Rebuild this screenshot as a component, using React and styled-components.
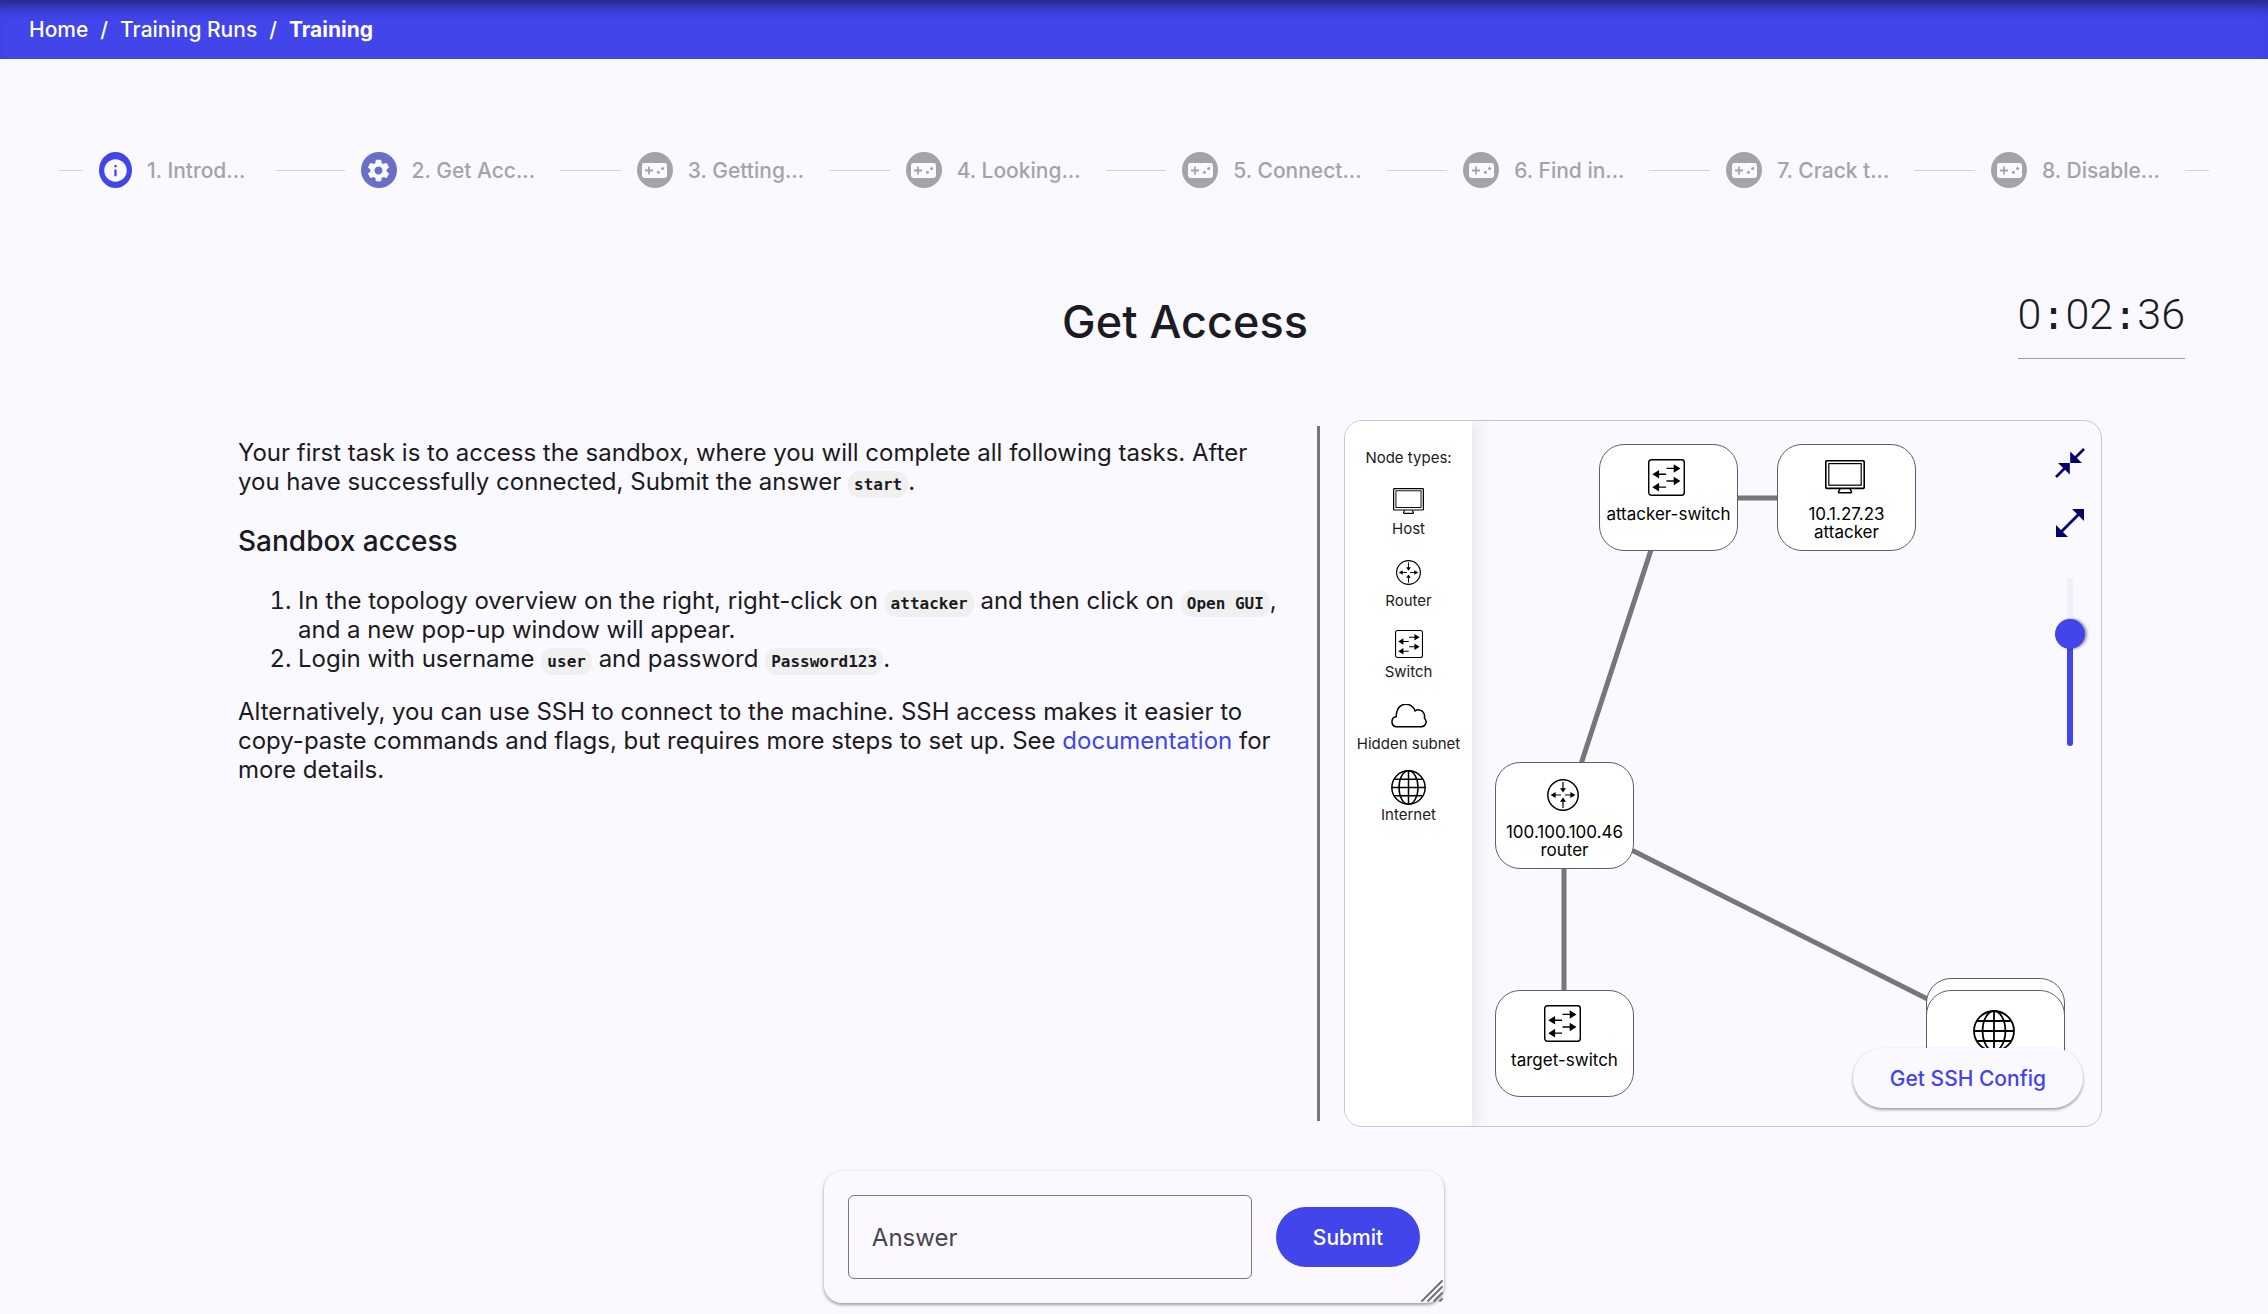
import React, { useState } from "react";
import styled, { createGlobalStyle } from "styled-components";
import { MdInfo, MdSettings } from "react-icons/md";

const sans = `Inter, "Noto Sans", sans-serif`;
const mono = `"DejaVu Sans Mono", monospace`;
const primary = "#4145ea";
const ink = "#1b1b21";
const surface = "#faf9ff";

const GlobalStyle = createGlobalStyle`
  * { box-sizing: border-box; }
  body {
    margin: 0;
    background: ${surface};
    color: ${ink};
    font-family: ${sans};
    font-size: 24px;
    line-height: 29px;
  }
  button, input { font-family: inherit; }
`;

const TopBar = styled.header`
  display: flex;
  align-items: center;
  height: 59px;
  padding: 0 29px;
  background: ${primary};
  box-shadow: inset 0 16px 16px -12px rgba(0, 0, 0, 0.55);
`;

const Crumbs = styled.nav`
  display: flex;
  gap: 12px;
  color: #fff;
  font-size: 21px;
  font-weight: 500;
`;

const Crumb = styled.a`
  color: inherit;
  text-decoration: none;
  font-weight: ${(p) => (p.$current ? 700 : 500)};
`;

const Page = styled.main`
  display: flex;
  flex-direction: column;
`;

const Stepper = styled.ol`
  display: flex;
  align-items: center;
  height: 108px;
  margin: 57px 59px;
  padding: 0;
  list-style: none;
`;

const Step = styled.li`
  display: flex;
  align-items: center;
  flex: ${(p) => (p.$last ? "0 0 auto" : `${p.$grow} 0 auto`)};
`;

const StepBody = styled.button`
  display: flex;
  align-items: center;
  gap: 15px;
  padding: 0 ${(p) => (p.$first ? 31 : 25)}px 0 16px;
  border: 0;
  background: none;
  color: #a4a3a9;
  font-size: 21px;
  font-weight: 500;
  line-height: 29px;
  white-space: nowrap;
`;

const StepIcon = styled.span`
  display: grid;
  place-items: center;
  width: ${(p) => (p.$narrow ? 33 : 36)}px;
  height: 36px;
  border-radius: 50%;
  background: ${(p) => p.$color};
  color: ${surface};
`;

const Rule = styled.span`
  flex: ${(p) => (p.$cap ? "0 0 24px" : "1 0 24px")};
  height: 1px;
  background: #d3d2d8;
`;

const TitleRow = styled.div`
  display: grid;
  grid-template-columns: 1fr auto 1fr;
  align-items: start;
  margin-bottom: 57px;
  padding: 0 83px 0 185px;
`;

const Title = styled.h1`
  grid-column: 2;
  margin: 0;
  font-size: 45px;
  font-weight: 500;
  line-height: 82px;
`;

const Timer = styled.time`
  justify-self: end;
  height: 78px;
  border-bottom: 1px solid #9c9ba2;
  font-family: Roboto, sans-serif;
  font-size: 43px;
  font-weight: 300;
  line-height: 66px;
`;

const Colon = styled.span`
  font-family: ${mono};
  font-size: 40px;
`;

const Columns = styled.div`
  display: grid;
  grid-template-columns: 1151fr 3px 782fr;
  margin: 0 166px;
`;

const Lesson = styled.section`
  padding: 18px 34px 0 72px;

  p { margin: 0 0 24px; }
  h2 {
    margin: 28px 0;
    font-size: 28px;
    font-weight: 500;
    line-height: 34px;
  }
  ol {
    margin: 0 0 24px;
    padding-left: 60px;
  }
`;

const Code = styled.code`
  padding: 4px 6px;
  border-radius: 12px;
  background: #f0f0f0;
  font-family: ${mono};
  font-size: 16px;
  font-weight: 700;
  line-height: 16px;
  white-space: nowrap;
`;

const DocLink = styled.a`
  color: ${primary};
  text-decoration: none;
`;

const Divider = styled.div`
  margin: 6px 0;
  background: #777680;
`;

const Panel = styled.section`
  display: flex;
  min-height: 707px;
  margin-left: 24px;
  overflow: hidden;
  border: 1px solid #c7c5d0;
  border-radius: 18px;
`;

const Legend = styled.aside`
  display: flex;
  flex-direction: column;
  align-items: center;
  flex: 0 0 127px;
  gap: 15px;
  padding-top: 27px;
  background: #fff;
  box-shadow: 0 0 20px rgba(60, 60, 90, 0.16);
  font-size: 15px;
  line-height: 20px;
`;

const LegendList = styled.ul`
  display: flex;
  flex-direction: column;
  justify-content: space-between;
  height: 342px;
  margin: 0;
  padding: 0;
  list-style: none;
`;

const LegendItem = styled.li`
  display: flex;
  flex-direction: column;
  align-items: center;
`;

const IconBox = styled.span`
  display: grid;
  place-items: center;
  height: ${(p) => p.$h}px;
`;

const Canvas = styled.div`
  position: relative;
  flex: 1;
  overflow: hidden;
`;

const Links = styled.svg`
  position: absolute;
  inset: 0;
  width: 100%;
  height: 100%;
`;

const Node = styled.div`
  position: absolute;
  left: ${(p) => p.$x}px;
  top: ${(p) => p.$y}px;
  display: flex;
  flex-direction: column;
  align-items: center;
  width: 139px;
  height: 107px;
  padding-top: 11px;
  border: 1px solid #5e5e65;
  border-radius: 25px;
  background: #fff;
  color: #000;
  font-size: 17px;
  line-height: 18px;
  text-align: center;
  white-space: nowrap;

  ${IconBox} {
    margin-bottom: 7px;
    padding-right: 4px;
  }
`;

const Controls = styled.div`
  position: absolute;
  top: 19px;
  right: 14px;
  display: flex;
  flex-direction: column;
  align-items: center;
`;

const IconButton = styled.button`
  display: grid;
  place-items: center;
  width: 34px;
  height: 46px;
  margin-bottom: 14px;
  padding: 0;
  border: 0;
  background: none;
  color: #06006c;
`;

const Zoom = styled.input`
  appearance: none;
  writing-mode: vertical-lr;
  direction: rtl;
  width: 30px;
  height: 168px;
  margin: 18px 0 0;
  background: none;

  &::-webkit-slider-runnable-track {
    width: 6px;
    border-radius: 3px;
    background: linear-gradient(to top, ${primary} 66%, #f0effa 66%);
  }
  &::-webkit-slider-thumb {
    appearance: none;
    width: 30px;
    height: 30px;
    margin-left: -12px;
    border-radius: 50%;
    background: ${primary};
    box-shadow: 2px 0 3px rgba(0, 0, 0, 0.4);
  }
`;

const Button = styled.button`
  height: 60px;
  padding: 0 37px;
  border: 0;
  border-radius: 30px;
  background: ${(p) => (p.$filled ? primary : surface)};
  color: ${(p) => (p.$filled ? "#fff" : primary)};
  box-shadow: ${(p) => (p.$filled ? "none" : "0 2px 3px rgba(0, 0, 0, 0.28), 0 1px 3px rgba(0, 0, 0, 0.14)")};
  font-size: 21px;
  font-weight: 500;
`;

const SshCorner = styled.div`
  position: absolute;
  right: 18px;
  bottom: 18px;
`;

const AnswerCard = styled.form`
  position: relative;
  display: flex;
  align-items: center;
  align-self: center;
  gap: 24px;
  margin: 44px 0 10px;
  padding: 24px;
  border-radius: 18px;
  background: #fbf8ff;
  box-shadow: 0 2px 3px rgba(0, 0, 0, 0.28), 0 1px 4px rgba(0, 0, 0, 0.14);
`;

const Field = styled.div`
  display: grid;
  width: 404px;
  align-items: center;

  > * { grid-area: 1 / 1; }
`;

const FieldLabel = styled.label`
  padding-left: 24px;
  color: #46464f;
  pointer-events: none;
  visibility: ${(p) => (p.$hidden ? "hidden" : "visible")};
`;

const FieldInput = styled.input`
  width: 100%;
  height: 84px;
  padding: 0 24px;
  border: 1px solid #777680;
  border-radius: 6px;
  background: none;
  color: ${ink};
  font-size: 24px;
`;

const Grip = styled.svg`
  position: absolute;
  right: 1px;
  bottom: 1px;
`;

function GamepadIcon() {
  return (
    <svg width="25" height="15" viewBox="0 0 25 15" aria-hidden="true">
      <rect width="25" height="15" rx="2.4" fill="currentColor" />
      <path d="M7 3.5v8M3 7.5h8" stroke="#a4a3a9" strokeWidth="1.8" />
      <circle cx="16.4" cy="9.2" r="1.5" fill="#a4a3a9" />
      <circle cx="20.6" cy="5.6" r="1.5" fill="#a4a3a9" />
    </svg>
  );
}

function HostIcon({ size }) {
  return (
    <svg width={size} height={size * 0.84} viewBox="0 0 40 33.6" fill="none" stroke="#000" aria-hidden="true">
      <rect x="0.8" y="0.8" width="38.4" height="27.6" rx="1" strokeWidth="1.6" />
      <rect x="3.8" y="3.6" width="32.4" height="21.6" strokeWidth="1.2" />
      <path d="M15 28.6l-1.4 3.2q-.2 1 .8 1h11.2q1 0 .8-1L25 28.6" strokeWidth="1.5" />
    </svg>
  );
}

function RouterIcon({ size }) {
  return (
    <svg width={size} height={size} viewBox="0 0 32 32" aria-hidden="true">
      <circle cx="16" cy="16" r="15.2" fill="none" stroke="#000" strokeWidth="1.5" />
      <path d="M16 3v7M16 29v-7M14 16H8M18 16h7" stroke="#000" strokeWidth="1.2" />
      <path d="M13 9.2h6L16 13.6zM13 22.8h6L16 18.4zM8.6 13v6L3.6 16zM23.4 13v6L28.4 16z" />
    </svg>
  );
}

function SwitchIcon({ size }) {
  return (
    <svg width={size} height={size} viewBox="0 0 36 36" aria-hidden="true">
      <rect x="0.7" y="0.7" width="34.6" height="34.6" rx="2.6" fill="none" stroke="#000" strokeWidth="1.4" />
      <path d="M18 9.2h9M18 21.4h9M17.6 14.8h-9M17.6 27.4h-9" stroke="#000" strokeWidth="1.3" />
      <path d="M25 5v8.4l6.6-4.2zM25 17.2v8.4l6.6-4.2zM10.8 10.6V19l-6.6-4.2zM10.8 23.2v8.4l-6.6-4.2z" />
    </svg>
  );
}

function CloudIcon() {
  return (
    <svg width="37" height="24" viewBox="0 0 37 24" fill="none" stroke="#000" strokeWidth="1.5" strokeLinejoin="round" aria-hidden="true">
      <path d="M6 22.8h25.4a4.9 4.9 0 0 0 3-8.6q.8-3.6-1.4-6.2a5.8 5.8 0 0 0-8-1A9.4 9.4 0 0 0 6.6 9q-.6 1.8-.2 3.6A5.2 5.2 0 0 0 6 22.8z" />
    </svg>
  );
}

function GlobeIcon({ size }) {
  return (
    <svg width={size} height={size} viewBox="0 0 42 42" fill="none" stroke="#000" strokeWidth="1.8" aria-hidden="true">
      <circle cx="21" cy="21" r="20" />
      <ellipse cx="21" cy="21" rx="11.4" ry="20" />
      <path d="M21 1v40M1 21h40M4.2 11h33.6M4.2 31h33.6" />
    </svg>
  );
}

function ShrinkIcon() {
  return (
    <svg width="30" height="30" viewBox="0 0 30 30" fill="currentColor" aria-hidden="true">
      <path d="M15.2 3.4V15H27z" />
      <path d="M14.8 26.6V15H3z" />
      <path d="M18 12L29 1M12 18L1 29" stroke="currentColor" strokeWidth="2.6" />
    </svg>
  );
}

function GrowIcon() {
  return (
    <svg width="28" height="28" viewBox="0 0 28 28" fill="currentColor" aria-hidden="true">
      <path d="M16 0h12v12z" />
      <path d="M0 16v12h12z" />
      <path d="M5 23L23 5" stroke="currentColor" strokeWidth="2.8" />
    </svg>
  );
}

const steps = [
  { label: "1. Introd...", color: primary, icon: <MdInfo size={27} /> },
  { label: "2. Get Acc...", color: "#6a6ec6", icon: <MdSettings size={27} /> },
  ...["3. Getting...", "4. Looking...", "5. Connect...", "6. Find in...", "7. Crack t...", "8. Disable..."].map(
    (label) => ({ label, color: "#a4a3a9", icon: <GamepadIcon /> })
  ),
];

const nodeTypes = [
  { label: "Host", icon: <HostIcon size={31} /> },
  { label: "Router", icon: <RouterIcon size={25} /> },
  { label: "Switch", icon: <SwitchIcon size={28} /> },
  { label: "Hidden subnet", icon: <CloudIcon /> },
  { label: "Internet", icon: <GlobeIcon size={35} /> },
];

const nodes = [
  { x: 127, y: 23, icon: <SwitchIcon size={37} />, lines: ["attacker-switch"] },
  { x: 305, y: 23, icon: <HostIcon size={40} />, lines: ["10.1.27.23", "attacker"] },
  { x: 23, y: 341, icon: <RouterIcon size={32} />, lines: ["100.100.100.46", "router"] },
  { x: 23, y: 569, icon: <SwitchIcon size={37} />, lines: ["target-switch"] },
  { x: 454, y: 557, lines: [] },
  { x: 454, y: 569, icon: <GlobeIcon size={42} />, iconHeight: 58, lines: [] },
];

export default function App() {
  const [zoom, setZoom] = useState(70);
  const [answer, setAnswer] = useState("");

  return (
    <>
      <GlobalStyle />
      <TopBar>
        <Crumbs aria-label="Breadcrumb">
          <Crumb href="#home">Home</Crumb>
          <span>/</span>
          <Crumb href="#runs">Training Runs</Crumb>
          <span>/</span>
          <Crumb href="#training" $current aria-current="page">Training</Crumb>
        </Crumbs>
      </TopBar>
      <Page>
        <Stepper>
          <Rule as="li" $cap />
          {steps.map((s, i) => (
            <Step key={s.label} $grow={i === 0 ? 6 : 5} $last={i === steps.length - 1}>
              <StepBody type="button" $first={i === 0}>
                <StepIcon $color={s.color} $narrow={i === 0}>{s.icon}</StepIcon>
                {s.label}
              </StepBody>
              {i < steps.length - 1 && <Rule />}
            </Step>
          ))}
          <Rule as="li" $cap />
        </Stepper>

        <TitleRow>
          <Title>Get Access</Title>
          <Timer>
            0<Colon>:</Colon>02<Colon>:</Colon>36
          </Timer>
        </TitleRow>

        <Columns>
          <Lesson>
            <p>
              Your first task is to access the sandbox, where you will complete all following tasks. After you have
              successfully connected, Submit the answer <Code>start</Code>.
            </p>
            <h2>Sandbox access</h2>
            <ol>
              <li>
                In the topology overview on the right, right-click on <Code>attacker</Code> and then click on{" "}
                <Code>Open GUI</Code>, and a new pop-up window will appear.
              </li>
              <li>
                Login with username <Code>user</Code> and password <Code>Password123</Code>.
              </li>
            </ol>
            <p>
              Alternatively, you can use SSH to connect to the machine. SSH access makes it easier to copy-paste
              commands and flags, but requires more steps to set up. See{" "}
              <DocLink href="#documentation">documentation</DocLink> for more details.
            </p>
          </Lesson>
          <Divider />
          <Panel>
            <Legend>
              <span>Node types:</span>
              <LegendList>
                {nodeTypes.map((t) => (
                  <LegendItem key={t.label}>
                    <IconBox $h={36}>{t.icon}</IconBox>
                    {t.label}
                  </LegendItem>
                ))}
              </LegendList>
            </Legend>
            <Canvas>
              <Links stroke="#76777b" strokeWidth="5" aria-hidden="true">
                <path d="M196 77H374M196 77L92 395M92 395V622M92 395L523 612" fill="none" />
              </Links>
              {nodes.map((n) => (
                <Node key={`${n.x}-${n.y}`} $x={n.x} $y={n.y}>
                  {n.icon && <IconBox $h={n.iconHeight || 42}>{n.icon}</IconBox>}
                  {n.lines.map((l) => (
                    <span key={l}>{l}</span>
                  ))}
                </Node>
              ))}
              <Controls>
                <IconButton type="button" aria-label="Collapse"><ShrinkIcon /></IconButton>
                <IconButton type="button" aria-label="Expand"><GrowIcon /></IconButton>
                <Zoom
                  type="range"
                  aria-label="Zoom"
                  min="0"
                  max="100"
                  value={zoom}
                  onChange={(e) => setZoom(Number(e.target.value))}
                />
              </Controls>
              <SshCorner>
                <Button type="button">Get SSH Config</Button>
              </SshCorner>
            </Canvas>
          </Panel>
        </Columns>

        <AnswerCard onSubmit={(e) => e.preventDefault()}>
          <Field>
            <FieldInput id="answer" value={answer} onChange={(e) => setAnswer(e.target.value)} />
            <FieldLabel htmlFor="answer" $hidden={answer !== ""}>Answer</FieldLabel>
          </Field>
          <Button type="submit" $filled>Submit</Button>
          <Grip width="22" height="22" viewBox="0 0 22 22" stroke="#6c6c72" strokeWidth="1.8" strokeLinecap="round" aria-hidden="true">
            <path d="M1 21L21 1M7 21L21 7M13 21L21 13M19 21l2-2" />
          </Grip>
        </AnswerCard>
      </Page>
    </>
  );
}
